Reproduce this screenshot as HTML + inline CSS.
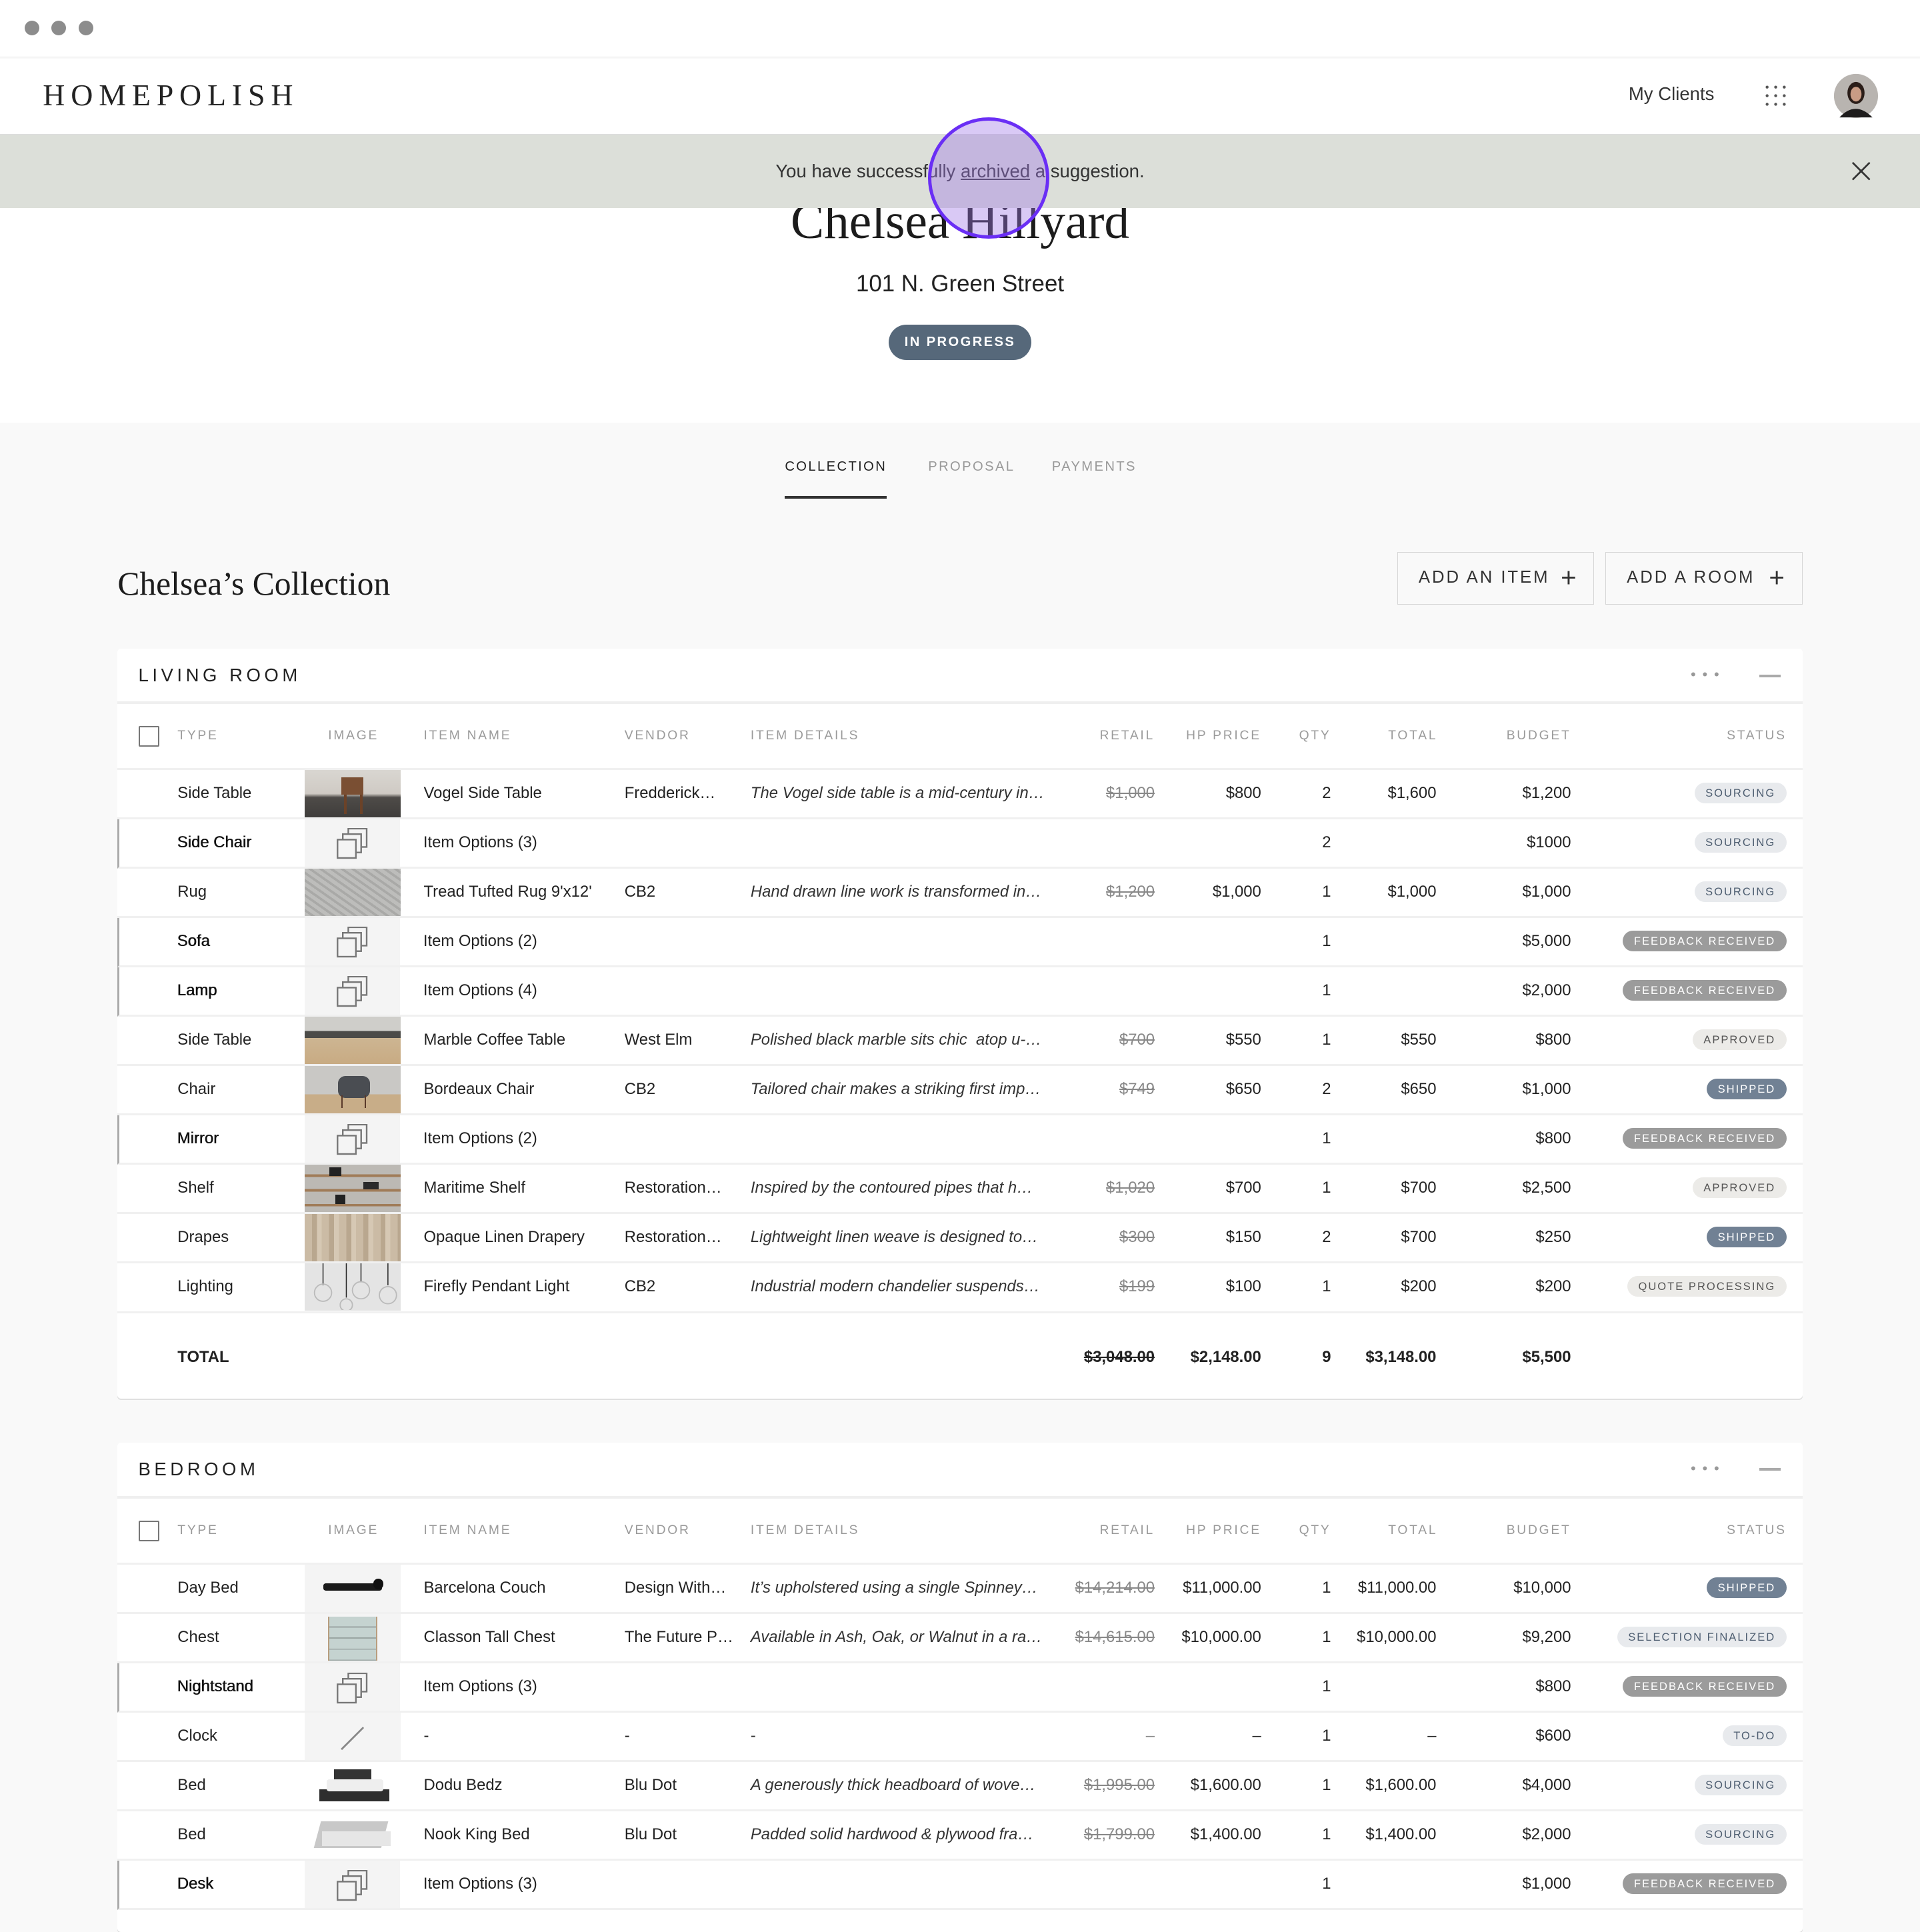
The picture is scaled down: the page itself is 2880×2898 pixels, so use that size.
<!DOCTYPE html>
<html><head><meta charset="utf-8">
<style>
html{zoom:1.83673}
*{box-sizing:border-box;margin:0;padding:0}
body{width:1568px;height:1551px;overflow:hidden;background:#f9f9f9;font-family:"Liberation Sans",sans-serif;color:#222;position:relative}
.abs{position:absolute}
.chrome{left:0;top:0;width:1568px;height:47px;background:#fff;border-bottom:1px solid #e8e8e8}
.dot{width:12px;height:12px;border-radius:50%;background:#8c8c8c;top:17px}
.nav{left:0;top:48px;width:1568px;height:62px;background:#fff;border-bottom:1px solid #ddd}
.logo{left:35px;top:15px;font-family:"Liberation Serif",serif;font-size:25px;letter-spacing:4.8px;color:#222}
.hero{left:0;top:110px;width:1568px;height:235px;background:#fff}
.banner{left:0;top:110px;width:1568px;height:60px;background:#dcdfd9;font-size:15px;text-align:center;line-height:60px;color:#333}
.tab{top:375px;font-size:11px;letter-spacing:1.3px;color:#999}
.btn{top:451px;height:43px;border:1px solid #d6d6d6;background:#f9f9f9;font-size:14px;letter-spacing:1.6px;color:#333;line-height:41px;padding-left:17px}
.btn span{position:absolute;right:14px;top:0;font-size:22px;font-weight:300;letter-spacing:0}
.card{left:96px;width:1376px;background:#fff;border-radius:3px;box-shadow:0 1px 0 #ddd}
.room{position:absolute;left:17px;top:13px;font-size:15px;letter-spacing:3px;color:#222}
.more{position:absolute;right:67px;top:12px;color:#999;font-size:12px;letter-spacing:1px;line-height:18px}
.min{position:absolute;right:18px;top:21px;width:17px;height:2px;background:#aaa}
.hline{position:absolute;left:0;width:1376px;height:2px;background:#efefef}
.row{position:absolute;left:0;width:1376px;height:40.3px;border-bottom:2px solid #f0f0f0;font-size:13px;line-height:38px}
.row>div{position:absolute;top:0;white-space:nowrap}
.hd{font-size:10.5px;letter-spacing:1.5px;color:#9a9a9a}
.opt{border-left:2px solid #aaa}
.opt .ty{color:#111;text-shadow:0.3px 0 0 #111}
.opt>div{margin-left:-2px}
.ty{left:49px}.im{left:153px;width:78px;height:38.3px}.nm{left:250px}.vd{left:414px}.dt{left:517px;font-style:italic;color:#333}
.rt{right:529px;color:#888;text-decoration:line-through}.hp{right:442px}.qt{right:385px}.tt{right:299px}.bg{right:189px}.st{right:13px}
.b{display:inline-block;height:17px;line-height:17px;border-radius:9px;padding:0 9px;font-size:9px;letter-spacing:1.1px;vertical-align:middle;margin-top:-2px}
.s1{background:#e8eaed;color:#4d5d70}.s2{background:#9b9b9b;color:#fff}.s3{background:#718194;color:#fff}.s4{background:#ecebe8;color:#555}
.gray{background:#f4f4f4}
.row>.chk{position:absolute;left:17px;top:18px;width:17px;height:17px;border:1.5px solid #777;border-radius:1px}
</style></head><body>
<div class="abs chrome"></div>
<div class="abs dot" style="left:20px"></div><div class="abs dot" style="left:42px"></div><div class="abs dot" style="left:64px"></div>
<div class="abs nav">
<div class="abs logo">HOMEPOLISH</div>
<div class="abs" style="left:1330px;top:20px;font-size:15px;color:#333">My Clients</div>
<svg class="abs" style="left:1441px;top:21px" width="18" height="18"><g fill="#555"><circle cx="2" cy="2" r="1.2"/><circle cx="9" cy="2" r="1.2"/><circle cx="16" cy="2" r="1.2"/><circle cx="2" cy="9" r="1.2"/><circle cx="9" cy="9" r="1.2"/><circle cx="16" cy="9" r="1.2"/><circle cx="2" cy="16" r="1.2"/><circle cx="9" cy="16" r="1.2"/><circle cx="16" cy="16" r="1.2"/></g></svg>
<svg class="abs" style="left:1497px;top:12px" width="37" height="37"><circle cx="18.5" cy="18.5" r="18" fill="#b8b4b0"/><path d="M5 36 Q18 22 32 36Z" fill="#1e1c1c"/><ellipse cx="18.5" cy="16" rx="7" ry="9" fill="#2a1d18"/><ellipse cx="18.5" cy="17" rx="4.5" ry="6" fill="#c99c85"/></svg>
</div>
<div class="abs hero"></div>
<div class="abs" style="left:0;top:158px;width:1568px;text-align:center;font-family:'Liberation Serif',serif;font-size:41px;color:#1c1c1c">Chelsea Hillyard</div>
<div class="abs" style="left:0;top:221px;width:1568px;text-align:center;font-size:19px;color:#222">101 N. Green Street</div>
<div class="abs" style="left:726px;top:265px;width:116px;height:29px;border-radius:15px;background:#56687a;color:#fff;font-size:11px;letter-spacing:1.3px;text-align:center;line-height:29px;font-weight:bold">IN PROGRESS</div>
<div class="abs banner">You have successfully <u>archived</u> a suggestion.</div>
<svg class="abs" style="left:1512px;top:132px" width="16" height="16"><path d="M1 1L15 15M15 1L1 15" stroke="#333" stroke-width="1.5"/></svg>
<div class="abs" style="left:758px;top:96px;width:99px;height:99px;border-radius:50%;border:3px solid #6a2ef5;background:rgba(160,120,230,0.4)"></div>

<div class="abs tab" style="left:641px;color:#222">COLLECTION</div>
<div class="abs" style="left:641px;top:405px;width:83px;height:2px;background:#333"></div>
<div class="abs tab" style="left:758px">PROPOSAL</div>
<div class="abs tab" style="left:859px">PAYMENTS</div>
<div class="abs" style="left:96px;top:461px;font-family:'Liberation Serif',serif;font-size:27px;color:#1c1c1c">Chelsea’s Collection</div>
<div class="abs btn" style="left:1141px;width:161px">ADD AN ITEM<span>+</span></div>
<div class="abs btn" style="left:1311px;width:161px">ADD A ROOM<span>+</span></div>

<div class="abs card" style="top:530px;height:612px">
<div class="room">LIVING ROOM</div><div class="more">• • •</div><div class="min"></div>
<div class="hline" style="top:43px"></div>
<div class="row hd" style="top:45px;height:54px;line-height:52px"><div class="chk"></div><div class="ty">TYPE</div><div style="left:172px">IMAGE</div><div class="nm">ITEM NAME</div><div class="vd">VENDOR</div><div class="dt" style="font-style:normal;color:#9a9a9a">ITEM DETAILS</div><div style="right:529px">RETAIL</div><div style="right:442px">HP PRICE</div><div style="right:385px">QTY</div><div style="right:298px">TOTAL</div><div style="right:189px">BUDGET</div><div style="right:13px">STATUS</div></div>

<div class="row" style="top:99px"><div class="ty">Side Table</div><div class="im" style="background:linear-gradient(#d9d6d1 0,#cfcac4 50%,#4e4b48 58%,#3f3d3b 100%)"><div style="position:absolute;left:30px;top:6px;width:18px;height:14px;background:#7a4f33"></div><div style="position:absolute;left:32px;top:20px;width:2px;height:16px;background:#6b4228"></div><div style="position:absolute;left:45px;top:20px;width:2px;height:16px;background:#6b4228"></div></div><div class="nm">Vogel Side Table</div><div class="vd">Fredderick…</div><div class="dt">The Vogel side table is a mid-century in…</div><div class="rt">$1,000</div><div class="hp">$800</div><div class="qt">2</div><div class="tt">$1,600</div><div class="bg">$1,200</div><div class="st"><span class="b s1">SOURCING</span></div></div>
<div class="row opt" style="top:139.3px"><div class="ty">Side Chair</div><div class="im gray"></div><div class="nm">Item Options (3)</div><div class="qt">2</div><div class="bg">$1000</div><div class="st"><span class="b s1">SOURCING</span></div></div>
<div class="row" style="top:179.6px"><div class="ty">Rug</div><div class="im" style="background:repeating-linear-gradient(35deg,#bdbdbb 0 3px,#a9a9a7 3px 5px)"></div><div class="nm">Tread Tufted Rug 9'x12'</div><div class="vd">CB2</div><div class="dt">Hand drawn line work is transformed in…</div><div class="rt">$1,200</div><div class="hp">$1,000</div><div class="qt">1</div><div class="tt">$1,000</div><div class="bg">$1,000</div><div class="st"><span class="b s1">SOURCING</span></div></div>
<div class="row opt" style="top:219.9px"><div class="ty">Sofa</div><div class="im gray"></div><div class="nm">Item Options (2)</div><div class="qt">1</div><div class="bg">$5,000</div><div class="st"><span class="b s2">FEEDBACK RECEIVED</span></div></div>
<div class="row opt" style="top:260.2px"><div class="ty">Lamp</div><div class="im gray"></div><div class="nm">Item Options (4)</div><div class="qt">1</div><div class="bg">$2,000</div><div class="st"><span class="b s2">FEEDBACK RECEIVED</span></div></div>
<div class="row" style="top:300.5px"><div class="ty">Side Table</div><div class="im" style="background:linear-gradient(#cfceca 0 30%,#4c4b48 30% 45%,#cdb592 45%,#c8ab83 100%)"></div><div class="nm">Marble Coffee Table</div><div class="vd">West Elm</div><div class="dt">Polished black marble sits chic &nbsp;atop u-…</div><div class="rt">$700</div><div class="hp">$550</div><div class="qt">1</div><div class="tt">$550</div><div class="bg">$800</div><div class="st"><span class="b s4">APPROVED</span></div></div>
<div class="row" style="top:340.8px"><div class="ty">Chair</div><div class="im" style="background:linear-gradient(#c9c8c5 0 60%,#c8ad88 60%)"><div style="position:absolute;left:27px;top:8px;width:26px;height:18px;border-radius:6px;background:#4a4d52"></div><div style="position:absolute;left:30px;top:24px;width:20px;height:10px;border-left:1.5px solid #5a3a2a;border-right:1.5px solid #5a3a2a"></div></div><div class="nm">Bordeaux Chair</div><div class="vd">CB2</div><div class="dt">Tailored chair makes a striking first imp…</div><div class="rt">$749</div><div class="hp">$650</div><div class="qt">2</div><div class="tt">$650</div><div class="bg">$1,000</div><div class="st"><span class="b s3">SHIPPED</span></div></div>
<div class="row opt" style="top:381.1px"><div class="ty">Mirror</div><div class="im gray"></div><div class="nm">Item Options (2)</div><div class="qt">1</div><div class="bg">$800</div><div class="st"><span class="b s2">FEEDBACK RECEIVED</span></div></div>
<div class="row" style="top:421.4px"><div class="ty">Shelf</div><div class="im" style="background:repeating-linear-gradient(#bcb9b4 0 8px,#a07c58 8px 10px,#bcb9b4 10px 12px);"><div style="position:absolute;left:20px;top:2px;width:10px;height:7px;background:#222"></div><div style="position:absolute;left:48px;top:14px;width:12px;height:6px;background:#2a2a2a"></div><div style="position:absolute;left:25px;top:24px;width:8px;height:8px;background:#222"></div></div><div class="nm">Maritime Shelf</div><div class="vd">Restoration…</div><div class="dt">Inspired by the contoured pipes that h…</div><div class="rt">$1,020</div><div class="hp">$700</div><div class="qt">1</div><div class="tt">$700</div><div class="bg">$2,500</div><div class="st"><span class="b s4">APPROVED</span></div></div>
<div class="row" style="top:461.7px"><div class="ty">Drapes</div><div class="im" style="background:repeating-linear-gradient(90deg,#cbbba5 0 6px,#b9a78f 6px 10px,#d6c8b4 10px 14px)"></div><div class="nm">Opaque Linen Drapery</div><div class="vd">Restoration…</div><div class="dt">Lightweight linen weave is designed to…</div><div class="rt">$300</div><div class="hp">$150</div><div class="qt">2</div><div class="tt">$700</div><div class="bg">$250</div><div class="st"><span class="b s3">SHIPPED</span></div></div>
<div class="row" style="top:502px"><div class="ty">Lighting</div><div class="im" style="background:#e4e4e4"><svg width="78" height="38"><g stroke="#222" stroke-width="0.8"><path d="M15 0V18M34 0V28M46 0V15M68 0V18"/></g><g fill="none" stroke="#bbb"><circle cx="15" cy="24" r="7"/><circle cx="46" cy="22" r="7"/><circle cx="68" cy="26" r="7"/><circle cx="34" cy="34" r="5"/></g></svg></div><div class="nm">Firefly Pendant Light</div><div class="vd">CB2</div><div class="dt">Industrial modern chandelier suspends…</div><div class="rt">$199</div><div class="hp">$100</div><div class="qt">1</div><div class="tt">$200</div><div class="bg">$200</div><div class="st"><span class="b s4">QUOTE PROCESSING</span></div></div>
<div class="row" style="top:542.3px;height:70px;line-height:72px;font-weight:bold;border:0"><div class="ty">TOTAL</div><div class="rt" style="color:#222">$3,048.00</div><div class="hp">$2,148.00</div><div class="qt">9</div><div class="tt">$3,148.00</div><div class="bg">$5,500</div></div>
</div>

<div class="abs card" style="top:1178px;height:400px">
<div class="room">BEDROOM</div><div class="more">• • •</div><div class="min"></div>
<div class="hline" style="top:44px"></div>
<div class="row hd" style="top:46px;height:54px;line-height:52px"><div class="chk"></div><div class="ty">TYPE</div><div style="left:172px">IMAGE</div><div class="nm">ITEM NAME</div><div class="vd">VENDOR</div><div class="dt" style="font-style:normal;color:#9a9a9a">ITEM DETAILS</div><div style="right:529px">RETAIL</div><div style="right:442px">HP PRICE</div><div style="right:385px">QTY</div><div style="right:298px">TOTAL</div><div style="right:189px">BUDGET</div><div style="right:13px">STATUS</div></div>
<div class="row" style="top:100px"><div class="ty">Day Bed</div><div class="im gray"><div style="position:absolute;left:15px;top:15px;width:48px;height:6px;background:#1a1a1a;border-radius:2px"></div><div style="position:absolute;left:56px;top:11px;width:8px;height:9px;background:#111;border-radius:4px"></div></div><div class="nm">Barcelona Couch</div><div class="vd">Design With…</div><div class="dt">It’s upholstered using a single Spinney…</div><div class="rt">$14,214.00</div><div class="hp">$11,000.00</div><div class="qt">1</div><div class="tt">$11,000.00</div><div class="bg">$10,000</div><div class="st"><span class="b s3">SHIPPED</span></div></div>
<div class="row" style="top:140.3px"><div class="ty">Chest</div><div class="im gray"><div style="position:absolute;left:19px;top:2px;width:40px;height:36px;background:repeating-linear-gradient(#c5d3d0 0 8px,#9aa6a3 8px 9px);border-left:1.5px solid #b89d7e;border-right:1.5px solid #b89d7e"></div></div><div class="nm">Classon Tall Chest</div><div class="vd">The Future P…</div><div class="dt">Available in Ash, Oak, or Walnut in a ra…</div><div class="rt">$14,615.00</div><div class="hp">$10,000.00</div><div class="qt">1</div><div class="tt">$10,000.00</div><div class="bg">$9,200</div><div class="st"><span class="b s1">SELECTION FINALIZED</span></div></div>
<div class="row opt" style="top:180.6px"><div class="ty">Nightstand</div><div class="im gray"></div><div class="nm">Item Options (3)</div><div class="qt">1</div><div class="bg">$800</div><div class="st"><span class="b s2">FEEDBACK RECEIVED</span></div></div>
<div class="row" style="top:220.9px"><div class="ty">Clock</div><div class="im gray"><svg width="78" height="38"><path d="M30 30L48 12" stroke="#888" stroke-width="1.5"/></svg></div><div class="nm">-</div><div class="vd">-</div><div class="dt" style="font-style:normal">-</div><div class="rt" style="text-decoration:none">–</div><div class="hp">–</div><div class="qt">1</div><div class="tt">–</div><div class="bg">$600</div><div class="st"><span class="b s1">TO-DO</span></div></div>
<div class="row" style="top:261.2px"><div class="ty">Bed</div><div class="im"><div style="position:absolute;left:24px;top:6px;width:30px;height:10px;background:#333"></div><div style="position:absolute;left:12px;top:22px;width:57px;height:10px;background:#2e2e2e"></div><div style="position:absolute;left:18px;top:14px;width:46px;height:10px;background:#eee;border-radius:2px"></div></div><div class="nm">Dodu Bedz</div><div class="vd">Blu Dot</div><div class="dt">A generously thick headboard of wove…</div><div class="rt">$1,995.00</div><div class="hp">$1,600.00</div><div class="qt">1</div><div class="tt">$1,600.00</div><div class="bg">$4,000</div><div class="st"><span class="b s1">SOURCING</span></div></div>
<div class="row" style="top:301.5px"><div class="ty">Bed</div><div class="im"><div style="position:absolute;left:10px;top:8px;width:55px;height:22px;background:#c8c8c8;transform:skewX(-15deg)"></div><div style="position:absolute;left:14px;top:16px;width:56px;height:12px;background:#e6e6e6"></div></div><div class="nm">Nook King Bed</div><div class="vd">Blu Dot</div><div class="dt">Padded solid hardwood &amp; plywood fra…</div><div class="rt">$1,799.00</div><div class="hp">$1,400.00</div><div class="qt">1</div><div class="tt">$1,400.00</div><div class="bg">$2,000</div><div class="st"><span class="b s1">SOURCING</span></div></div>
<div class="row opt" style="top:341.8px"><div class="ty">Desk</div><div class="im gray"></div><div class="nm">Item Options (3)</div><div class="qt">1</div><div class="bg">$1,000</div><div class="st"><span class="b s2">FEEDBACK RECEIVED</span></div></div>
</div>

<svg width="0" height="0" style="position:absolute"><defs><g id="opi"><rect x="9.5" y="0.5" width="15" height="15" fill="#f4f4f4" stroke="#777" stroke-width="1.3"/><rect x="5" y="5" width="15" height="15" fill="#f4f4f4" stroke="#777" stroke-width="1.3"/><rect x="0.7" y="9.5" width="15" height="15" fill="#f4f4f4" stroke="#777" stroke-width="1.3"/></g></defs></svg>
<svg class="abs" style="left:275px;top:676px" width="26" height="26"><use href="#opi"/></svg>
<svg class="abs" style="left:275px;top:757px" width="26" height="26"><use href="#opi"/></svg>
<svg class="abs" style="left:275px;top:797px" width="26" height="26"><use href="#opi"/></svg>
<svg class="abs" style="left:275px;top:918px" width="26" height="26"><use href="#opi"/></svg>
<svg class="abs" style="left:275px;top:1366px" width="26" height="26"><use href="#opi"/></svg>
<svg class="abs" style="left:275px;top:1527px" width="26" height="26"><use href="#opi"/></svg>
</body></html>
